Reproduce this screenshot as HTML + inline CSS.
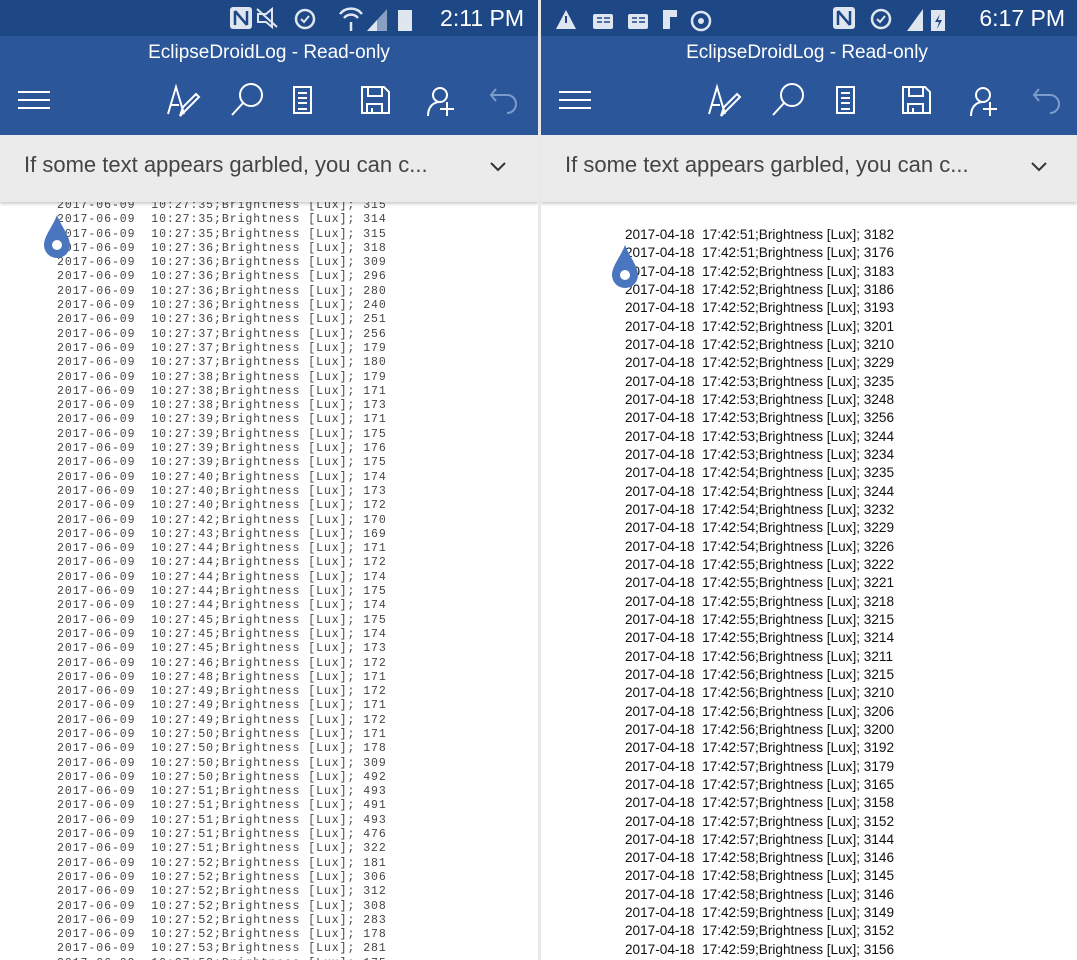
<!DOCTYPE html>
<html><head><meta charset="utf-8"><style>
*{margin:0;padding:0;box-sizing:border-box}
body{width:1077px;height:960px;overflow:hidden;background:#fff;position:relative;font-family:"Liberation Sans",sans-serif}
.p{position:absolute;top:0;height:960px;overflow:hidden;background:#fff}
.sb{position:absolute;left:0;top:0;width:100%;height:36px;background:#1e4785}
.hd{position:absolute;left:0;top:36px;width:100%;height:99px;background:#2b579a}
.title{position:absolute;top:42px;width:100%;text-align:center;color:#fff;font-size:19px}
.bn{position:absolute;left:0;top:135px;width:100%;height:67px;background:#ebebeb;box-shadow:0 2px 3px rgba(0,0,0,.2);z-index:2}
.bn span{position:absolute;left:24px;top:17px;font-size:22px;color:#444}
.time{position:absolute;top:5px;right:14px;color:#fff;font-size:23px}
.mono{position:absolute;left:57px;top:199px;font-family:"Liberation Mono",monospace;font-size:11.5px;letter-spacing:0.95px;line-height:14.3px;color:#444;white-space:pre}
.sans{position:absolute;left:625px;top:226px;font-size:13.6px;line-height:18.33px;color:#111;white-space:pre}
</style></head><body>
<div class="p" style="left:0;width:538px">
<div class="sb"></div><div class="hd"></div>
<div class="title">EclipseDroidLog - Read-only</div>
<div class="time">2:11 PM</div>
<svg style="position:absolute;left:225px;top:6px" width="200" height="26" fill="#dfe6f0">
<rect x="5" y="1" width="22" height="22" rx="3"/><path d="M10 5v14M22 5v14M10 5l12 14" stroke="#1e4785" stroke-width="2.5"/>
<path d="M33 8h8l6-5v18l-6-5h-8zM32 3l20 18" stroke="#dfe6f0" stroke-width="2" fill="none"/>
<circle cx="80" cy="13" r="9" fill="none" stroke="#dfe6f0" stroke-width="2.5"/><path d="M76 13l3 3 5-6" stroke="#dfe6f0" stroke-width="2" fill="none"/>
<path d="M115 8a14 14 0 0 1 22 0M119 12a9 9 0 0 1 14 0M126 16v9" stroke="#dfe6f0" stroke-width="2.5" fill="none"/>
<path d="M142 25l20-22v22z" fill="#8aa0c0"/><path d="M142 25l10-11v11z"/>
<rect x="173" y="4" width="14" height="21"/>
</svg>
<svg style="position:absolute;left:0;top:78px" width="538" height="45" fill="none" stroke="#fff" stroke-width="2">
<path d="M18 14h32M18 22h32M18 30h32"/>
<path d="M168 36l8-27 8 27M171 27h8M180 38l3-9 13-13 3 3-13 13z"/>
<circle cx="251" cy="17" r="11"/><path d="M243 25l-11 12"/>
<rect x="294" y="9" width="17" height="26"/><path d="M298 15h9M298 20h9M298 25h9M298 31h9"/>
<path d="M362 9h22l5 5v21h-27zM368 9v9h14V9M367 35V26h15v9M372 30v5"/>
<circle cx="440" cy="17" r="7"/><path d="M428 38c0-10 6-14 12-14M447 24v14M440 31h14"/>
<path d="M496 11l-5 6 5 6M491 17h16a9 9 0 0 1 0 18" stroke="#7d9ccc"/>
</svg>
<div class="bn"><span>If some text appears garbled, you can c...</span><svg style="position:absolute;left:489px;top:25px" width="20" height="14" fill="none" stroke="#333" stroke-width="2"><path d="M2 3l7 7 7-7"/></svg></div>
<div class="mono">2017-06-09  10:27:35;Brightness [Lux]; 315
2017-06-09  10:27:35;Brightness [Lux]; 314
2017-06-09  10:27:35;Brightness [Lux]; 315
2017-06-09  10:27:36;Brightness [Lux]; 318
2017-06-09  10:27:36;Brightness [Lux]; 309
2017-06-09  10:27:36;Brightness [Lux]; 296
2017-06-09  10:27:36;Brightness [Lux]; 280
2017-06-09  10:27:36;Brightness [Lux]; 240
2017-06-09  10:27:36;Brightness [Lux]; 251
2017-06-09  10:27:37;Brightness [Lux]; 256
2017-06-09  10:27:37;Brightness [Lux]; 179
2017-06-09  10:27:37;Brightness [Lux]; 180
2017-06-09  10:27:38;Brightness [Lux]; 179
2017-06-09  10:27:38;Brightness [Lux]; 171
2017-06-09  10:27:38;Brightness [Lux]; 173
2017-06-09  10:27:39;Brightness [Lux]; 171
2017-06-09  10:27:39;Brightness [Lux]; 175
2017-06-09  10:27:39;Brightness [Lux]; 176
2017-06-09  10:27:39;Brightness [Lux]; 175
2017-06-09  10:27:40;Brightness [Lux]; 174
2017-06-09  10:27:40;Brightness [Lux]; 173
2017-06-09  10:27:40;Brightness [Lux]; 172
2017-06-09  10:27:42;Brightness [Lux]; 170
2017-06-09  10:27:43;Brightness [Lux]; 169
2017-06-09  10:27:44;Brightness [Lux]; 171
2017-06-09  10:27:44;Brightness [Lux]; 172
2017-06-09  10:27:44;Brightness [Lux]; 174
2017-06-09  10:27:44;Brightness [Lux]; 175
2017-06-09  10:27:44;Brightness [Lux]; 174
2017-06-09  10:27:45;Brightness [Lux]; 175
2017-06-09  10:27:45;Brightness [Lux]; 174
2017-06-09  10:27:45;Brightness [Lux]; 173
2017-06-09  10:27:46;Brightness [Lux]; 172
2017-06-09  10:27:48;Brightness [Lux]; 171
2017-06-09  10:27:49;Brightness [Lux]; 172
2017-06-09  10:27:49;Brightness [Lux]; 171
2017-06-09  10:27:49;Brightness [Lux]; 172
2017-06-09  10:27:50;Brightness [Lux]; 171
2017-06-09  10:27:50;Brightness [Lux]; 178
2017-06-09  10:27:50;Brightness [Lux]; 309
2017-06-09  10:27:50;Brightness [Lux]; 492
2017-06-09  10:27:51;Brightness [Lux]; 493
2017-06-09  10:27:51;Brightness [Lux]; 491
2017-06-09  10:27:51;Brightness [Lux]; 493
2017-06-09  10:27:51;Brightness [Lux]; 476
2017-06-09  10:27:51;Brightness [Lux]; 322
2017-06-09  10:27:52;Brightness [Lux]; 181
2017-06-09  10:27:52;Brightness [Lux]; 306
2017-06-09  10:27:52;Brightness [Lux]; 312
2017-06-09  10:27:52;Brightness [Lux]; 308
2017-06-09  10:27:52;Brightness [Lux]; 283
2017-06-09  10:27:52;Brightness [Lux]; 178
2017-06-09  10:27:53;Brightness [Lux]; 281
2017-06-09  10:27:53;Brightness [Lux]; 175</div>
<svg style="position:absolute;left:43px;top:214px;z-index:3" width="28" height="46"><path d="M14 1C10 12 1 22 1 31a13 13 0 0 0 26 0C27 22 18 12 14 1z" fill="#4a76c0"/><circle cx="14" cy="31" r="5" fill="#fff"/></svg>
</div>
<div style="position:absolute;left:538px;top:0;width:3px;height:960px;background:#e8e8e8"></div>
<div class="p" style="left:541px;width:536px">
<div class="sb"></div><div class="hd"></div>
<div class="title" style="left:-2px">EclipseDroidLog - Read-only</div>
<div class="time" style="right:12px">6:17 PM</div>
<svg style="position:absolute;left:14px;top:6px" width="170" height="26" fill="#dfe6f0">
<path d="M1 23L11 4l10 19z"/><rect x="10" y="10" width="2" height="7" fill="#1e4785"/>
<rect x="38" y="8" width="20" height="15" rx="2"/><path d="M42 12h5M42 16h5M49 12h6M49 16h6" stroke="#1e4785" stroke-width="1.5"/>
<rect x="73" y="8" width="20" height="15" rx="2"/><path d="M77 12h5M77 16h5M84 12h6M84 16h6" stroke="#1e4785" stroke-width="1.5"/>
<path d="M108 4h14v7h-7v12h-7z"/>
<circle cx="146" cy="15" r="9" fill="none" stroke="#dfe6f0" stroke-width="2.5"/><circle cx="146" cy="15" r="3"/>
</svg>
<svg style="position:absolute;left:290px;top:6px" width="140" height="26" fill="#dfe6f0">
<rect x="2" y="1" width="22" height="22" rx="3"/><path d="M7 5v14M19 5v14M7 5l12 14" stroke="#1e4785" stroke-width="2.5"/>
<circle cx="50" cy="13" r="9" fill="none" stroke="#dfe6f0" stroke-width="2.5"/><path d="M46 13l3 3 5-6" stroke="#dfe6f0" stroke-width="2" fill="none"/>
<path d="M76 25l16-22v22z"/>
<rect x="100" y="4" width="14" height="21"/><path d="M109 8l-5 8h4l-2 7 5-9h-4z" fill="#1e4785"/>
</svg>
<svg style="position:absolute;left:0;top:78px" width="536" height="45" fill="none" stroke="#fff" stroke-width="2">
<path d="M18 14h32M18 22h32M18 30h32"/>
<path d="M168 36l8-27 8 27M171 27h8M180 38l3-9 13-13 3 3-13 13z"/>
<circle cx="251" cy="17" r="11"/><path d="M243 25l-11 12"/>
<rect x="296" y="9" width="17" height="26"/><path d="M300 15h9M300 20h9M300 25h9M300 31h9"/>
<path d="M362 9h22l5 5v21h-27zM368 9v9h14V9M367 35V26h15v9M372 30v5"/>
<circle cx="442" cy="17" r="7"/><path d="M430 38c0-10 6-14 12-14M449 24v14M442 31h14"/>
<path d="M498 11l-5 6 5 6M493 17h16a9 9 0 0 1 0 18" stroke="#7d9ccc"/>
</svg>
<div class="bn"><span>If some text appears garbled, you can c...</span><svg style="position:absolute;left:489px;top:25px" width="20" height="14" fill="none" stroke="#333" stroke-width="2"><path d="M2 3l7 7 7-7"/></svg></div>
<div class="sans" style="left:84px">2017-04-18  17:42:51;Brightness [Lux]; 3182
2017-04-18  17:42:51;Brightness [Lux]; 3176
2017-04-18  17:42:52;Brightness [Lux]; 3183
2017-04-18  17:42:52;Brightness [Lux]; 3186
2017-04-18  17:42:52;Brightness [Lux]; 3193
2017-04-18  17:42:52;Brightness [Lux]; 3201
2017-04-18  17:42:52;Brightness [Lux]; 3210
2017-04-18  17:42:52;Brightness [Lux]; 3229
2017-04-18  17:42:53;Brightness [Lux]; 3235
2017-04-18  17:42:53;Brightness [Lux]; 3248
2017-04-18  17:42:53;Brightness [Lux]; 3256
2017-04-18  17:42:53;Brightness [Lux]; 3244
2017-04-18  17:42:53;Brightness [Lux]; 3234
2017-04-18  17:42:54;Brightness [Lux]; 3235
2017-04-18  17:42:54;Brightness [Lux]; 3244
2017-04-18  17:42:54;Brightness [Lux]; 3232
2017-04-18  17:42:54;Brightness [Lux]; 3229
2017-04-18  17:42:54;Brightness [Lux]; 3226
2017-04-18  17:42:55;Brightness [Lux]; 3222
2017-04-18  17:42:55;Brightness [Lux]; 3221
2017-04-18  17:42:55;Brightness [Lux]; 3218
2017-04-18  17:42:55;Brightness [Lux]; 3215
2017-04-18  17:42:55;Brightness [Lux]; 3214
2017-04-18  17:42:56;Brightness [Lux]; 3211
2017-04-18  17:42:56;Brightness [Lux]; 3215
2017-04-18  17:42:56;Brightness [Lux]; 3210
2017-04-18  17:42:56;Brightness [Lux]; 3206
2017-04-18  17:42:56;Brightness [Lux]; 3200
2017-04-18  17:42:57;Brightness [Lux]; 3192
2017-04-18  17:42:57;Brightness [Lux]; 3179
2017-04-18  17:42:57;Brightness [Lux]; 3165
2017-04-18  17:42:57;Brightness [Lux]; 3158
2017-04-18  17:42:57;Brightness [Lux]; 3152
2017-04-18  17:42:57;Brightness [Lux]; 3144
2017-04-18  17:42:58;Brightness [Lux]; 3146
2017-04-18  17:42:58;Brightness [Lux]; 3145
2017-04-18  17:42:58;Brightness [Lux]; 3146
2017-04-18  17:42:59;Brightness [Lux]; 3149
2017-04-18  17:42:59;Brightness [Lux]; 3152
2017-04-18  17:42:59;Brightness [Lux]; 3156</div>
<svg style="position:absolute;left:70px;top:244px;z-index:3" width="28" height="46"><path d="M14 1C10 12 1 22 1 31a13 13 0 0 0 26 0C27 22 18 12 14 1z" fill="#4a76c0"/><circle cx="14" cy="31" r="5" fill="#fff"/></svg>
</div>
</body></html>
